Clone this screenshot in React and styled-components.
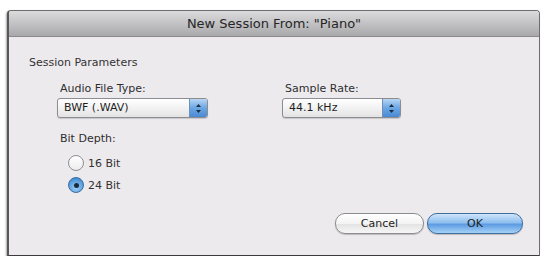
import React from 'react'
import styled, {createGlobalStyle} from 'styled-components'

const GlobalStyle = createGlobalStyle`
    html, body {
        margin: 0;
        padding: 0;
        background: #ffffff;
        font-family: "DejaVu Sans", "Liberation Sans", sans-serif;
    }
`

// dialog window
const Page = styled.div`
    width: 545px;
    height: 256px;
    padding: 10px 5px 2px 7px;
    box-sizing: border-box;
`

const Window = styled.div`
    height: 100%;
    display: flex;
    flex-direction: column;
    border: 1px solid #6e6c70;
    border-bottom: 2px solid #3c3a3e;
    border-left: 2px solid #58565a;
    border-radius: 4px 4px 0 0;
    background: #edeaee;
    box-shadow: -1px 1px 2px rgba(0,0,0,0.35);
    overflow: hidden;
`

const TitleBar = styled.div`
    height: 25px;
    flex: none;
    display: flex;
    align-items: center;
    justify-content: center;
    background: linear-gradient(#dcdbdc, #c2c1c3 50%, #a9a8aa);
    border-bottom: 1px solid #8a898b;
    font-size: 13px;
    color: #262626;
`

const Body = styled.div`
    flex: 1;
    display: flex;
    flex-direction: column;
    padding: 19px 16px 0 20px;
`

const GroupTitle = styled.div`
    font-size: 11px;
    color: #333;
    margin-bottom: 13px;
`

const Columns = styled.div`
    display: grid;
    grid-template-columns: 225px 1fr;
    padding-left: 28px;
`

const Field = styled.div`
    display: flex;
    flex-direction: column;
`

const Label = styled.div`
    font-size: 11px;
    color: #2e2e2e;
    margin: ${p => p.$top || 0}px 0 3px 3px;
`

const Popup = styled.div`
    width: ${p => p.$w}px;
    height: 18px;
    display: flex;
    border: 1px solid #8d8c90;
    border-radius: 3px;
    background: linear-gradient(#ffffff, #f2f2f2 50%, #e3e3e3);
    box-shadow: 0 1px 1px rgba(0,0,0,0.15);
    overflow: hidden;
`

const PopupText = styled.div`
    flex: 1;
    font-size: 11px;
    line-height: 18px;
    padding-left: 6px;
    color: #1e1e1e;
`

const Stepper = styled.div`
    width: 17px;
    display: flex;
    align-items: center;
    justify-content: center;
    background: linear-gradient(#b8d6f4, #6aa6e4 50%, #4b8ad3);
    border-left: 1px solid #6b8fb8;
`

const Radios = styled.div`
    display: flex;
    flex-direction: column;
    gap: 6px;
    margin: 7px 0 0 11px;
`

const RadioRow = styled.div`
    display: flex;
    align-items: center;
    gap: 4px;
    font-size: 11px;
    color: #333;
`

const Radio = styled.div`
    width: 14px;
    height: 14px;
    border-radius: 50%;
    display: flex;
    align-items: center;
    justify-content: center;
    border: 1px solid ${p => p.$on ? '#3a6ea5' : '#8f8e92'};
    background: ${p => p.$on
        ? 'radial-gradient(circle at 50% 70%, #9ed0f8, #4f95d8 70%, #3475b8)'
        : 'linear-gradient(#ffffff, #ececec)'};
    &::after {
        content: '';
        display: ${p => p.$on ? 'block' : 'none'};
        width: 5px;
        height: 5px;
        border-radius: 50%;
        background: #1a2a3c;
    }
`

const Buttons = styled.div`
    display: flex;
    justify-content: flex-end;
    gap: 3px;
    margin-top: 20px;
`

const Button = styled.div`
    width: ${p => p.$w}px;
    height: 19px;
    display: flex;
    align-items: center;
    justify-content: center;
    border-radius: 10px;
    font-size: 11px;
    color: #1e1e1e;
    border: 1px solid ${p => p.$primary ? '#3f6d9e' : '#8c8b8f'};
    background: ${p => p.$primary
        ? 'linear-gradient(#cfe5fa, #8ebfef 45%, #5d9ce2 55%, #a6d2f8)'
        : 'linear-gradient(#ffffff, #f3f3f3 50%, #e4e4e4 55%, #f6f6f6)'};
    box-shadow: 0 1px 1px rgba(0,0,0,0.2);
`

function Arrows() {
    return (
        <svg width="7" height="11" viewBox="0 0 7 11">
            <path d="M3.5 1 L6 4 L1 4 Z" fill="#1c2b3d"/>
            <path d="M3.5 10 L6 7 L1 7 Z" fill="#1c2b3d"/>
        </svg>
    )
}

export default function App() {
    return (
        <Page>
            <GlobalStyle/>
            <Window>
                <TitleBar>New Session From: "Piano"</TitleBar>
                <Body>
                    <GroupTitle>Session Parameters</GroupTitle>
                    <Columns>
                        <Field>
                            <Label>Audio File Type:</Label>
                            <Popup $w={149}>
                                <PopupText>BWF (.WAV)</PopupText>
                                <Stepper><Arrows/></Stepper>
                            </Popup>
                            <Label $top={14}>Bit Depth:</Label>
                            <Radios>
                                <RadioRow><Radio/>16 Bit</RadioRow>
                                <RadioRow><Radio $on/>24 Bit</RadioRow>
                            </Radios>
                        </Field>
                        <Field>
                            <Label>Sample Rate:</Label>
                            <Popup $w={117}>
                                <PopupText>44.1 kHz</PopupText>
                                <Stepper><Arrows/></Stepper>
                            </Popup>
                        </Field>
                    </Columns>
                    <Buttons>
                        <Button $w={87}>Cancel</Button>
                        <Button $w={94} $primary>OK</Button>
                    </Buttons>
                </Body>
            </Window>
        </Page>
    )
}
